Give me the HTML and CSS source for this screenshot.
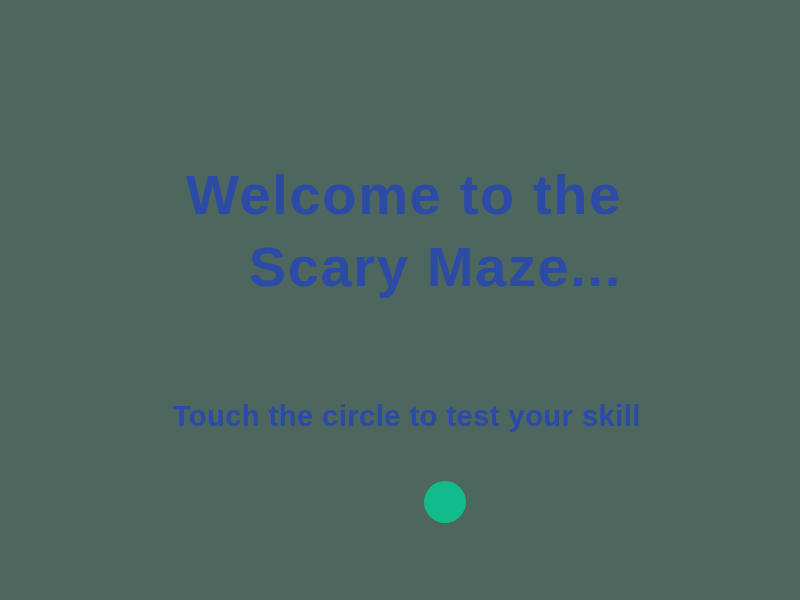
FILE: index.html
```html
<!DOCTYPE html>
<html lang="en">

<head>
    <meta charset="UTF-8">
    <meta name="viewport" content="width=device-width, initial-scale=1.0">
    <title>Scary Maze</title>
    <link rel="stylesheet" href="styles.css">
</head>

<body>
    <div id="start_skjerm">
        <h1 class="tittel">Welcome to the<br>Scary Maze...</h1>
        <p class="undertekst">Touch the circle to test your skill</p>
        <div class="start_sirkel"></div>
    </div>
</body>

</html>
```

FILE: styles.css
```css
body {
    margin: 0;
    padding: 0;
    background-color: #4d665e;
    font-family: "Liberation Sans", Arial, sans-serif;
    color: #2b4ba6;
    height: 600px;
    overflow: hidden;
}

#start_skjerm {
    display: flex;
    flex-direction: column;
    align-items: center;
    padding-top: 159px;
    padding-left: 8px;
}

.tittel {
    margin: 0;
    text-align: right;
    font-size: 56px;
    line-height: 72px;
    font-weight: bold;
    letter-spacing: 1.65px;
}

.undertekst {
    margin: 97px 0 0 5px;
    font-size: 29px;
    font-weight: bold;
    letter-spacing: 0.5px;
}

.start_sirkel {
    width: 42px;
    height: 42px;
    border-radius: 50%;
    background-color: #13bb8a;
    margin-top: 48px;
    margin-left: 82px;
}
```
